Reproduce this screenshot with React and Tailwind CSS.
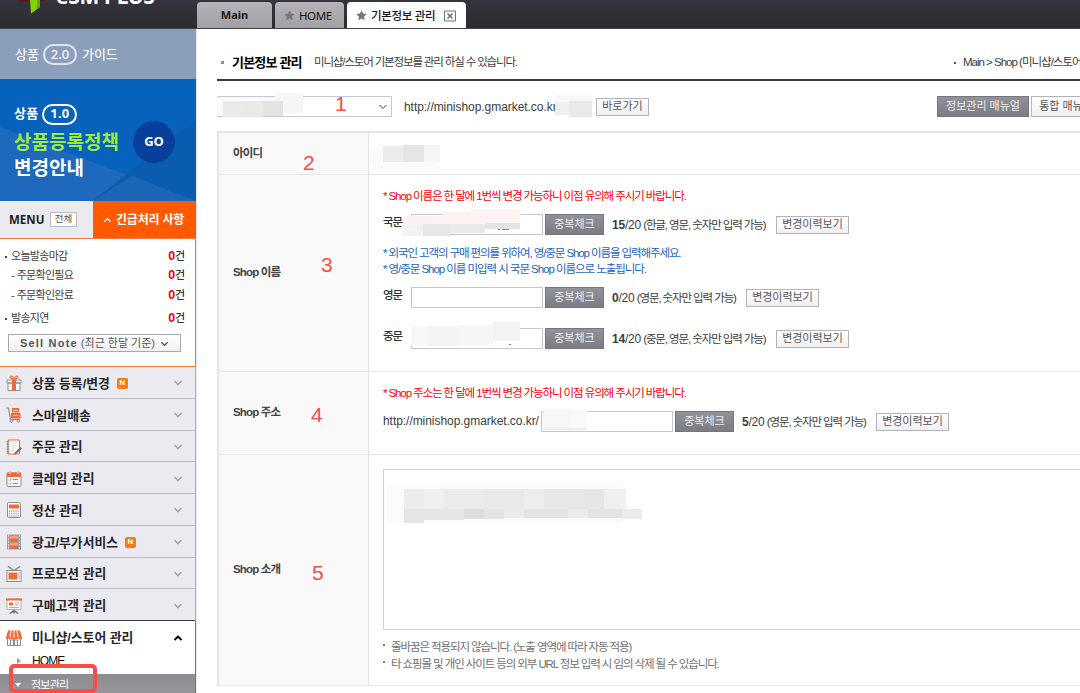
import React from "react";

const W = "#ffffff";
const O = "#f26a35";
const G = "#8b8b90";

const iconArt = {
  gift: (
    <>
      <path d="M1 5h14v3H1zM2 8h12v7.5H2z" fill={W} stroke={G} />
      <path d="M6 4.5h4v11H6z" fill={O} />
      <path d="M8 4C5 4 3.5 3 4 1.6 5 .2 7.500 1.500 8 4c.5-2.500 3-3.800 4-2.400C12.500 3 11 4 8 4z" fill="#f7a27e" stroke={O} />
    </>
  ),
  cart: (
    <>
      <path d="M0 1h2.500l2 11.500H14" fill="none" stroke={G} strokeWidth="1.200" />
      <path d="M6 1h7v4.500H6zM5 6h9.500v5.500H5z" fill={O} />
      <path d="M7 3.500h5M7 8.500h5.500" stroke="#fbd0bd" />
      <circle cx="5.500" cy="14" r="1.300" fill={W} stroke={G} />
      <circle cx="12.500" cy="14" r="1.300" fill={W} stroke={G} />
    </>
  ),
  note: (
    <>
      <rect x="2" y="1" width="11.500" height="14" rx="1" fill={W} stroke={O} strokeWidth="1.200" />
      <path d="M2 2v13" stroke={G} strokeWidth="2.500" strokeDasharray="1.500 1" />
      <path d="M5 4h6M5 6.500h6M5 9h5M5 11.500h3" stroke="#cfcfd4" strokeWidth=".8" />
      <path d="M16 9.500l-5.500 5-2.500 1.500.8-2.600L14.500 8z" fill="#6f6f75" />
    </>
  ),
  calendar: (
    <>
      <rect x="1" y="2" width="14" height="13.500" rx="1" fill={W} stroke={G} />
      <path d="M1 1.500h14V6H1z" fill={O} />
      <path d="M4 0v3M12 0v3" stroke="#f9c1a8" strokeWidth="1.500" />
      <path d="M3 8.500l1 1 1.500-2M7 8.500h5M3 12.500l1 1 1.500-2M7 12.500h5" fill="none" stroke={G} />
    </>
  ),
  calculator: (
    <>
      <rect x="1.500" y=".5" width="13" height="15" rx="1" fill={W} stroke={G} />
      <path d="M3 2.500h10v4H3z" fill={O} />
      <path d="M3 9h10M3 11.500h10M3 14h10" stroke="#b2b2b8" strokeWidth="1.500" strokeDasharray="1.500 .6" />
    </>
  ),
  film: (
    <>
      <path d="M1 .5h14v15H1z" fill="#9a9a9f" />
      <path d="M4 2h8v5.500H4zM4 9h8v5.500H4z" fill={O} />
      <path d="M4 2h8v2.500H4zM4 9h8v2.500H4z" fill="#f9a17c" />
      <path d="M2.500 1v14M13.500 1v14" stroke={W} strokeDasharray="1.500 1.500" />
    </>
  ),
  tv: (
    <>
      <path d="M2 .5l6 4 6-4" fill="none" stroke={G} strokeWidth="1.500" />
      <rect x="1" y="4.500" width="14" height="11" fill={W} stroke={G} />
      <path d="M2.500 6.500h9v7h-9z" fill={O} />
      <path d="M12.500 7h1.500M12.500 10h1.500M12.500 12h1.500" stroke={G} />
    </>
  ),
  board: (
    <>
      <path d="M8 11v4.500M4 15.500L8 12.500l4 3" fill="none" stroke="#6f6f75" strokeWidth="1.500" />
      <path d="M1 1h14v10.500H1z" fill={W} stroke="#c9a79a" />
      <path d="M0 .5h16v2H0z" fill={O} />
      <path d="M3 4.500h4v3H3z" fill={O} />
      <path d="M9 5h4M9 7h4M3 9.500h10" stroke="#a5a5aa" strokeWidth=".9" />
    </>
  ),
  store: (
    <>
      <path d="M1.500 6.500h13v9h-13z" fill={W} stroke={G} />
      <path d="M4.500 10h3v5.500M8.500 15.500V10h3v5.500M4.500 10v5.500" fill="none" stroke={G} />
      <path d="M2 .5h12l2 7a1.500 1.500 0 01-3 .5 1.500 1.500 0 01-3 0 1.500 1.500 0 01-4 0 1.500 1.500 0 01-3 0A1.500 1.500 0 010 7.500z" fill={O} />
      <path d="M5 .5l-1 7M8 .5v7M11 .5l1 7" stroke="#fcd9ca" strokeWidth="1.300" />
    </>
  ),
};

function MenuIcon({ name }) {
  return (
    <svg viewBox="0 0 16 16" className="h-4 w-4 shrink-0">
      {iconArt[name]}
    </svg>
  );
}

function Chevron({ up, className }) {
  return (
    <svg viewBox="0 0 10 6" className={className} fill="none" stroke="currentColor">
      <path d={up ? "M1.500 5L5 1.500 8.500 5" : "M1.500 1L5 4.500 8.500 1"} />
    </svg>
  );
}

function NewBadge() {
  return (
    <span className="ml-[7px] flex h-[11px] w-[11px] items-center justify-center rounded-[2px] bg-[#f97a0d] text-[8px] font-bold text-white">
      N
    </span>
  );
}

const menu = [
  { icon: "gift", label: "상품 등록/변경", isNew: true },
  { icon: "cart", label: "스마일배송" },
  { icon: "note", label: "주문 관리" },
  { icon: "calendar", label: "클레임 관리" },
  { icon: "calculator", label: "정산 관리" },
  { icon: "film", label: "광고/부가서비스", isNew: true },
  { icon: "tv", label: "프로모션 관리" },
  { icon: "board", label: "구매고객 관리" },
];

function Star() {
  return (
    <svg viewBox="0 0 12 12" className="h-[11px] w-[11px]" fill="#77767c">
      <path d="M6 .3l1.700 3.600 4 .5-2.900 2.800.7 4L6 9.300l-3.500 1.900.7-4L.3 4.400l4-.5z" />
    </svg>
  );
}

function Header() {
  return (
    <header className="flex h-[29px] shrink-0 overflow-hidden border-b border-[#47434c] bg-linear-to-b from-[#35343f] to-[#2b2b2f]">
      <div className="flex w-[197px] shrink-0 pl-4">
        <svg viewBox="0 0 32 14" className="h-[14px] w-8">
          <path d="M2 0h12v2H2z" fill="#5b1720" />
          <path d="M14 0h10v7l-9 6.500z" fill="#86cf0c" />
          <path d="M21 0h3v7l-3 2z" fill="#5fa507" />
          <path d="M24 0h6v1h-6z" fill="#5b1720" />
        </svg>
        <span className="-mt-[17px] ml-[8px] whitespace-nowrap font-['Noto_Sans'] text-[21px] leading-[26px] font-bold tracking-[-0.35px] text-white">
          eSM PLUS
        </span>
      </div>
      <nav className="mt-[2px] flex h-[27px] items-stretch gap-[3px] whitespace-nowrap text-[12px] text-[#161616]">
        <span className="flex w-[75px] items-center justify-center rounded-t-[4px] bg-linear-to-b from-[#b5b3b7] to-[#a09fa3] font-['Noto_Sans'] text-[11px] font-bold">
          Main
        </span>
        <span className="flex w-[69px] items-center gap-[4px] rounded-t-[4px] bg-linear-to-b from-[#b5b3b7] to-[#a09fa3] pl-[9px] font-['Noto_Sans'] text-[11.5px] tracking-[-0.4px]">
          <Star />
          HOME
        </span>
        <span className="flex w-[119px] items-center rounded-t-[4px] bg-white pl-[9px]">
          <Star />
          <span className="mt-[2px] ml-1 w-[69px] text-[11.5px] font-medium tracking-[-0.35px]">기본정보 관리</span>
          <svg viewBox="0 0 12 12" className="ml-1 h-3 w-3" fill="none" stroke="#6f6e76">
            <path d="M.5 1h11v10H.5z" />
            <path d="M3.500 3.500l5 5M8.500 3.500l-5 5" strokeWidth="1.500" />
          </svg>
        </span>
      </nav>
    </header>
  );
}

function PolicyBanner() {
  return (
    <div className="relative flex h-[122px] shrink-0 items-center justify-between bg-[#0662bb] pr-[21px] pl-[14px] text-white">
      <svg viewBox="0 0 196 122" className="absolute inset-0 h-full w-full" preserveAspectRatio="none">
        <path d="M0 48L196 122H0z" fill="#1e69bd" />
        <path d="M196 41V122L92 122z" fill="#0a5cb0" />
        <path d="M132 97L196 122H92z" fill="#1a65b5" />
      </svg>
      <div className="relative pt-[5px] font-bold whitespace-nowrap">
        <div className="flex h-[22px] items-center gap-1 text-[13px] tracking-[0.2px]">
          상품
          <span className="flex h-[21px] w-[35px] items-center justify-center rounded-full border-2 border-white font-['Noto_Sans'] text-[13px]">
            1.0
          </span>
        </div>
        <div className="mt-[4px] h-[27px] text-[19px] leading-[27px] text-[#9ded3a]">상품등록정책</div>
        <div className="h-[26px] text-[19px] leading-[26px]">변경안내</div>
      </div>
      <span className="relative mt-[4px] flex h-[42px] w-[42px] items-center justify-center rounded-full bg-[#083f9d] font-['Noto_Sans'] text-[13px] font-bold">
        GO
      </span>
    </div>
  );
}

function TodoRow({ label, dot, className }) {
  return (
    <div className={"flex items-center justify-between " + className}>
      <span className="flex items-center tracking-[-0.7px] text-[#3f3f45]">
        {dot ? (
          <span className="mr-[4px] ml-px h-[2px] w-[2px] bg-[#44444a]" />
        ) : (
          <span className="mr-[2px] ml-[7px] tracking-normal">-</span>
        )}
        {label}
      </span>
      <span className="tracking-[-0.2px] text-black">
        <b className="text-[12.5px] text-[#f0000c]">0</b>건
      </span>
    </div>
  );
}

function Sidebar() {
  return (
    <aside className="flex w-[197px] shrink-0 flex-col border-r border-[#e5e5ea]">
      <div className="flex h-[50px] shrink-0 items-center gap-1 bg-[#8b9fbd] pt-px pl-[15px] text-[13px] font-medium whitespace-nowrap text-[#f1f4f8]">
        상품
        <span className="flex h-[21px] w-[34px] items-center justify-center rounded-full border-2 border-[#dfe5ed] font-['Noto_Sans'] text-[13px]">
          2.0
        </span>
        <span className="ml-px">가이드</span>
      </div>
      <PolicyBanner />
      <div className="flex h-[38px] shrink-0 border-b border-[#f57a35] whitespace-nowrap">
        <div className="flex w-[93px] items-center gap-[5px] bg-[#ebeaf0] pl-[9px]">
          <span className="w-[36px] font-['Noto_Sans'] text-[11.5px] font-bold text-[#222]">MENU</span>
          <span className="flex h-[15px] w-[27px] items-center justify-center border border-[#b8b8bd] bg-white text-[9.5px] text-[#555]">
            전체
          </span>
        </div>
        <div className="flex flex-1 items-center bg-[#ff5a00] pl-[10px] text-[12px] font-bold tracking-[-0.2px] text-white">
          <Chevron up className="mr-[4px] h-[6px] w-[9px] stroke-[1.5]" />
          긴급처리 사항
        </div>
      </div>
      <div className="h-[128px] shrink-0 border-r border-b border-[#f57a35] bg-white pt-[8px] pr-[10px] pl-1 text-[11px] whitespace-nowrap">
        <TodoRow dot label="오늘발송마감" className="h-[19px]" />
        <TodoRow label="주문확인필요" className="h-[19px]" />
        <TodoRow label="주문확인완료" className="h-[21px]" />
        <TodoRow dot label="발송지연" className="h-[25px]" />
        <div className="mt-[3px] ml-1 flex h-[18px] w-[173px] items-center justify-center border border-[#a9a9b0] bg-linear-to-b from-white to-[#efeff3] pt-px text-[11px] text-[#555]">
          <b className="tracking-[1.2px]">Sell Note</b>
          <span className="ml-[3px]">(최근 한달 기준)</span>
          <Chevron className="ml-[5px] h-[6px] w-[9px] stroke-[1.5]" />
        </div>
      </div>
      <div className="flex shrink-0 flex-col border-r border-[#b0b0b8] bg-[#ebeaf0]">
        {menu.map((m, i) => (
          <div
            key={m.label}
            className={
              "flex h-[31.75px] items-center border-b pt-[2px] pl-[6px] whitespace-nowrap " +
              (i === menu.length - 1 ? "border-[#37363f]" : "border-[#bcbec8]")
            }
          >
            <MenuIcon name={m.icon} />
            <span className="ml-[10px] text-[12.8px] font-bold tracking-[0px] text-[#26262a]">{m.label}</span>
            {m.isNew && <NewBadge />}
            <Chevron className="mr-[12px] ml-auto h-[6px] w-[10px] stroke-[1.6] text-[#a6a7ae]" />
          </div>
        ))}
      </div>
      <div className="relative flex flex-1 flex-col border-r border-[#77777d] bg-white whitespace-nowrap">
        <div className="flex h-[32px] shrink-0 items-center pt-px pl-[6px]">
          <MenuIcon name="store" />
          <span className="ml-[10px] text-[12.8px] font-bold tracking-[0px] text-[#26262a]">미니샵/스토어 관리</span>
          <Chevron up className="mr-[12px] ml-auto h-[6px] w-[10px] stroke-[1.9] text-black" />
        </div>
        <div className="flex h-[21px] shrink-0 items-start text-[12px] leading-[16px] tracking-[-0.9px] text-[#111]">
          <span className="mt-[5px] ml-[17px] h-0 w-0 border-y-[3px] border-l-4 border-y-transparent border-l-[#9b9dab]" />
          <span className="ml-[11px]">HOME</span>
        </div>
        <div className="flex flex-1 items-center bg-linear-to-b from-[#8c8c91] to-[#97979b] pt-[3px] text-[11px] tracking-[-0.8px] text-white">
          <span className="ml-[15px] h-0 w-0 border-x-[3.5px] border-t-4 border-x-transparent border-t-white" />
          <span className="ml-[10px]">정보관리</span>
        </div>
        <div className="absolute top-[43px] left-[9px] h-[29px] w-[88px] rounded-[5px] border-4 border-[#fb4d48]" />
      </div>
    </aside>
  );
}

function DarkButton({ children, className }) {
  return (
    <span
      className={
        "flex shrink-0 items-center justify-center border border-[#75757d] bg-linear-to-b from-[#92929a] to-[#7c7c84] text-[11px] tracking-normal whitespace-nowrap text-[#ededf0] " +
        className
      }
    >
      {children}
    </span>
  );
}

function LightButton({ children, className }) {
  return (
    <span
      className={
        "flex shrink-0 items-center justify-center border border-[#b3b3bd] bg-linear-to-b from-white to-[#f0f0f4] text-[11px] tracking-normal whitespace-nowrap text-[#55555a] " +
        className
      }
    >
      {children}
    </span>
  );
}

function Mosaic({ className, cells }) {
  return (
    <svg className={"absolute " + className} shapeRendering="crispEdges">
      {cells.map(([x, y, w, h, fill], i) => (
        <rect key={i} x={x} y={y} width={w} height={h} fill={fill} />
      ))}
    </svg>
  );
}

function CheckTools({ count, hint, wide }) {
  return (
    <>
      <DarkButton className="ml-[2px] h-[21px] w-[59px]">중복체크</DarkButton>
      <span className={"mt-[2px] ml-[8px] shrink-0 " + (wide ? "w-[164px]" : "w-[134px]")}>
        <span className="text-[12px] tracking-[-0.2px]">
          <b>{count}</b>/20
        </span>{" "}
        {hint}
      </span>
      <LightButton className="h-[18px] w-[73px]">변경이력보기</LightButton>
    </>
  );
}

function NameRow({ label, className, mosaic, ...tools }) {
  return (
    <div className={"relative flex h-[21px] items-center " + className}>
      <span className="w-[28px] shrink-0 pb-[3px] font-medium text-[#333]">{label}</span>
      <span className="h-[21px] w-[132px] shrink-0 border border-[#c5c5d4] bg-white" />
      <CheckTools {...tools} />
      {mosaic}
    </div>
  );
}

function Row({ label, mark, markClass, className, children }) {
  return (
    <div className={"flex shrink-0 border-b border-[#e6e6ef] " + className}>
      <div className="relative flex w-[150px] shrink-0 items-center border-r border-[#e2e2ec] bg-[#f9f9f9] pl-[14px] font-bold tracking-[-0.85px] text-[#444448]">
        {label}
        <span className={"absolute text-[21px] leading-[21px] font-normal tracking-normal text-[#fa4b46] " + markClass}>
          {mark}
        </span>
      </div>
      <div className="relative min-w-0 flex-1 pl-[14px]">{children}</div>
    </div>
  );
}

function InfoTable() {
  return (
    <section className="mt-[14px] flex w-[900px] flex-col border-t-2 border-l-2 border-[#e4e4ed]">
      <Row label="아이디" mark="2" markClass="left-[84px] top-[19px]" className="h-[42px]">
        <Mosaic
          className="top-[12px] left-[2px] h-[26px] w-[72px]"
          cells={[
            [0, 4, 12, 14, "#fafafa"],
            [3, 16, 64, 8, "#fafafa"],
            [12, 1, 20, 16, "#ececec"],
            [32, 0, 21, 17, "#e5e5e6"],
            [53, 0, 16, 17, "#f5f5f5"],
          ]}
        />
      </Row>
      <Row label="Shop 이름" mark="3" markClass="left-[102px] top-[79px]" className="h-[197px]">
        <p className="mt-[13px] h-4 leading-4 text-[#fb0007]">* Shop 이름은 한 달에 1번씩 변경 가능하니 이점 유의해 주시기 바랍니다.</p>
        <NameRow
          label="국문"
          className="mt-[10px]"
          count="15"
          hint="(한글, 영문, 숫자만 입력 가능)"
          wide
          mosaic={
            <Mosaic
              className="-top-[5px] left-[20px] h-[28px] w-[118px]"
              cells={[
                [0, 7, 40, 9, "#fdf1f1"],
                [40, 3, 28, 13, "#fdf2f2"],
                [68, 0, 49, 16, "#fdf3f3"],
                [0, 16, 20, 11, "#f1f3f3"],
                [20, 15, 27, 12, "#e6e7e7"],
                [47, 15, 35, 9, "#e9e9e9"],
                [82, 14, 35, 6, "#e5e4e4"],
                [95, 20, 2, 1, "#777"],
                [99, 20, 7, 1, "#888"],
              ]}
            />
          }
        />
        <p className="mt-[10px] h-4 leading-4 text-[#1e63bb]">* 외국인 고객의 구매 편의를 위하여, 영/중문 Shop 이름을 입력해주세요.</p>
        <p className="h-4 leading-4 tracking-[-1.05px] text-[#1e63bb]">* 영/중문 Shop 이름 미입력 시 국문 Shop 이름으로 노출됩니다.</p>
        <NameRow label="영문" className="mt-[10px]" count="0" hint="(영문, 숫자만 입력 가능)" />
        <NameRow
          label="중문"
          className="mt-[20px]"
          count="14"
          hint="(중문, 영문, 숫자만 입력 가능)"
          wide
          mosaic={
            <Mosaic
              className="-top-[6px] left-[28px] h-[26px] w-[110px]"
              cells={[
                [0, 4, 50, 20, "#f6f7f7"],
                [16, 4, 32, 20, "#f3f4f4"],
                [48, 3, 34, 20, "#f4f5f5"],
                [82, 0, 27, 19, "#f2f3f3"],
                [98, 22, 2, 1, "#777"],
              ]}
            />
          }
        />
      </Row>
      <Row label="Shop 주소" mark="4" markClass="left-[92px] top-[32px]" className="h-[83px]">
        <p className="mt-[13px] h-4 leading-4 text-[#fb0007]">* Shop 주소는 한 달에 1번씩 변경 가능하니 이점 유의해 주시기 바랍니다.</p>
        <div className="relative mt-[10px] flex h-[21px] items-center">
          <span className="w-[158px] shrink-0 pb-[2px] text-[12px] tracking-[-0.05px]">http://minishop.gmarket.co.kr/</span>
          <span className="h-[21px] w-[132px] shrink-0 border border-[#c5c5d4] bg-white" />
          <CheckTools count="5" hint="(영문, 숫자만 입력 가능)" />
          <Mosaic
            className="-top-[2px] left-[160px] h-[22px] w-[46px]"
            cells={[
              [0, 0, 28, 20, "#f9f7f6"],
              [28, 1, 16, 19, "#f9f9f9"],
              [0, 19, 44, 2, "#ececee"],
            ]}
          />
        </div>
      </Row>
      <Row label="Shop 소개" mark="5" markClass="left-[93px] top-[107px]" className="h-[231px]">
        <div className="relative mt-[14px] h-[161px] border border-[#cfcfdb] bg-white">
          <Mosaic
            className="top-[11px] left-[3px] h-[45px] w-[258px]"
            cells={[
              [0, 4, 236, 38, "#fbfbfb"],
              [60, 1, 176, 8, "#fbfbfb"],
              [17, 8, 20, 20, "#ebecec"],
              [37, 8, 20, 20, "#f0f0f0"],
              [57, 8, 40, 20, "#ebebec"],
              [97, 8, 40, 20, "#e9e9ea"],
              [137, 8, 20, 20, "#ededed"],
              [157, 8, 40, 20, "#e7e7e7"],
              [197, 8, 20, 20, "#e6e6e6"],
              [217, 8, 22, 20, "#eef0f0"],
              [17, 28, 20, 14, "#e4e5e5"],
              [37, 28, 40, 11, "#e5e6e6"],
              [77, 28, 20, 10, "#dededf"],
              [97, 28, 20, 10, "#e4e4e5"],
              [117, 28, 20, 9, "#ebebec"],
              [137, 28, 44, 9, "#e3e3e4"],
              [181, 28, 20, 9, "#ebebeb"],
              [201, 28, 34, 9, "#e3e3e3"],
              [235, 28, 20, 10, "#ebebeb"],
            ]}
          />
        </div>
        <ul className="mt-[9px] text-[#707076]">
          {["줄바꿈은 적용되지 않습니다. (노출 영역에 따라 자동 적용)", "타 쇼핑몰 및 개인 사이트 등의 외부 URL 정보 입력 시 임의 삭제 될 수 있습니다."].map((t) => (
            <li key={t} className="flex h-[17px] items-center">
              <span className="mb-[5px] h-[2px] w-[2px] bg-[#77777c]" />
              <span className="ml-[6px]">{t}</span>
            </li>
          ))}
        </ul>
      </Row>
    </section>
  );
}

export default function App() {
  return (
    <div className="flex h-[693px] w-[1080px] flex-col overflow-hidden bg-white font-['Liberation_Sans','Noto_Sans_CJK_KR',sans-serif] text-[#3c3c40]">
      <Header />
      <div className="flex min-h-0 flex-1">
        <Sidebar />
        <main className="flex min-w-0 flex-1 flex-col overflow-hidden pl-[20px] text-[11.5px] tracking-[-1.1px] whitespace-nowrap">
          <div className="flex h-[52px] shrink-0 items-center border-b-2 border-[#3b3945] pt-[17px]">
            <span className="ml-1 h-[3px] w-[3px] bg-[#8d8c96]" />
            <h1 className="ml-[8px] w-[82px] shrink-0 text-[13px] font-bold tracking-[-0.8px] text-black">기본정보 관리</h1>
            <p className="tracking-[-1.15px]">미니샵/스토어 기본정보를 관리 하실 수 있습니다.</p>
            <div className="ml-auto flex w-[126px] shrink-0 items-center">
              <span className="h-[2px] w-[2px] shrink-0 bg-[#55555b]" />
              <span className="ml-[7px] tracking-[-1px]">Main &gt; Shop (미니샵/스토어)</span>
            </div>
          </div>
          <div className="relative mt-[15px] flex h-[21px] shrink-0 items-center">
            <span className="flex h-[21px] w-[175px] shrink-0 items-center justify-end border border-[#c5c8dc] pr-[3px]">
              <Chevron className="h-[6px] w-[10px] text-[#444]" />
            </span>
            <span className="ml-[12px] w-[192px] shrink-0 text-[12px] tracking-[-0.05px]">http://minishop.gmarket.co.kr</span>
            <LightButton className="h-[18px] w-[53px] tracking-[-0.4px]">바로가기</LightButton>
            <DarkButton className="ml-[288px] h-[21px] w-[92px] tracking-[-0.1px]">정보관리 매뉴얼</DarkButton>
            <LightButton className="ml-[2px] h-[21px] w-[70px] tracking-[-0.1px]">통합 매뉴얼</LightButton>
            <Mosaic
              className="-top-[3px] left-0 h-[26px] w-[88px]"
              cells={[
                [0, 4, 87, 15, "#fbfbfb"],
                [0, 19, 6, 4, "#fbfbfb"],
                [58, 0, 28, 20, "#f6f6f6"],
                [6, 8, 20, 16, "#eaeaea"],
                [26, 8, 20, 16, "#e9e9e9"],
                [46, 8, 20, 15, "#e3e3e3"],
              ]}
            />
            <Mosaic
              className="-top-[1px] left-[338px] h-[24px] w-[38px]"
              cells={[
                [0, 0, 37, 8, "#f7f7f7"],
                [0, 7, 14, 13, "#efefef"],
                [14, 6, 23, 16, "#e9e9e9"],
              ]}
            />
            <span className="absolute top-[-3px] left-[118px] text-[21px] leading-[21px] tracking-normal text-[#fa4b46]">1</span>
          </div>
          <InfoTable />
        </main>
      </div>
    </div>
  );
}
